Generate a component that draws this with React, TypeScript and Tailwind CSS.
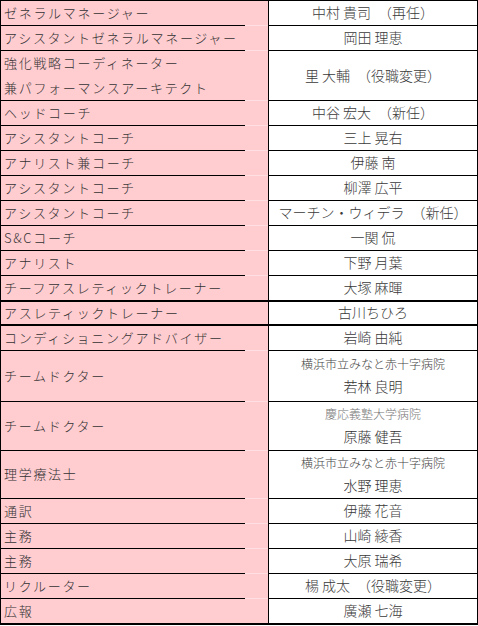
import React from "react";

type Row = {
  label: string[];
  name?: string;
  hospital?: string;
  hospitalLight?: boolean;
  h: string; // row height incl. bottom border
  thick?: boolean;
};

const rows: Row[] = [
  { label: ["ゼネラルマネージャー"], name: "中村 貴司　（再任）", h: "h-[25px]" },
  { label: ["アシスタントゼネラルマネージャー"], name: "岡田 理恵", h: "h-[25px]" },
  { label: ["強化戦略コーディネーター", "兼パフォーマンスアーキテクト"], name: "里 大輔　（役職変更）", h: "h-[50px]" },
  { label: ["ヘッドコーチ"], name: "中谷 宏大　（新任）", h: "h-[25px]" },
  { label: ["アシスタントコーチ"], name: "三上 晃右", h: "h-[25px]" },
  { label: ["アナリスト兼コーチ"], name: "伊藤 南", h: "h-[25px]" },
  { label: ["アシスタントコーチ"], name: "柳澤 広平", h: "h-[25px]" },
  { label: ["アシスタントコーチ"], name: "マーチン・ウィデラ　（新任）", h: "h-[25px]" },
  { label: ["S&Cコーチ"], name: "一関 侃", h: "h-[25px]" },
  { label: ["アナリスト"], name: "下野 月葉", h: "h-[25px]" },
  { label: ["チーフアスレティックトレーナー"], name: "大塚 麻暉", h: "h-[26px]", thick: true },
  { label: ["アスレティックトレーナー"], name: "古川ちひろ", h: "h-[24px]", thick: true },
  { label: ["コンディショニングアドバイザー"], name: "岩崎 由純", h: "h-[25px]" },
  { label: ["チームドクター"], hospital: "横浜市立みなと赤十字病院", name: "若林 良明", h: "h-[51px]" },
  { label: ["チームドクター"], hospital: "慶応義塾大学病院", hospitalLight: true, name: "原藤 健吾", h: "h-[49px]" },
  { label: ["理学療法士"], hospital: "横浜市立みなと赤十字病院", name: "水野 理恵", h: "h-[48px]" },
  { label: ["通訳"], name: "伊藤 花音", h: "h-[25px]" },
  { label: ["主務"], name: "山崎 綾香", h: "h-[25px]" },
  { label: ["主務"], name: "大原 瑞希", h: "h-[25px]" },
  { label: ["リクルーター"], name: "楊 成太　（役職変更）", h: "h-[25px]" },
  { label: ["広報"], name: "廣瀬 七海", h: "h-[26px]", thick: true },
];

const StaffRow = ({ row }: { row: Row }) => {
  const bottom = row.thick ? "border-b-2 border-black" : "border-b border-black";
  const fillerBottom = row.thick ? "border-b-2 border-black" : "border-b border-[#ffdfe2]";
  return (
    <div className={`flex ${row.h}`}>
      {/* role */}
      <div
        className={`w-[244px] bg-[#ffccd0] ${bottom} flex flex-col justify-center pl-[3px] pb-[2px] text-[13px] font-light tracking-[1.7px] text-[#333] whitespace-nowrap`}
      >
        {row.label.map((l, i) => (
          <div key={i} className="leading-[25px]">
            {l}
          </div>
        ))}
      </div>
      {/* pink filler */}
      <div className={`w-[23px] bg-[#ffccd0] ${fillerBottom}`} />
      {/* name */}
      <div
        className={`w-[209px] bg-white border-l border-l-black ${bottom} flex flex-col items-center justify-center pb-[2px] text-[14px] font-light text-[#3a3a3a] whitespace-nowrap`}
      >
        {row.hospital && (
          <div
            className={`text-[12px] leading-[23px] ${row.hospitalLight ? "text-[#777]" : "text-[#444]"}`}
          >
            {row.hospital}
          </div>
        )}
        <div className={row.hospital ? "leading-[23px] text-[#333]" : "leading-[22px]"}>{row.name}</div>
      </div>
    </div>
  );
};

export default function App() {
  return (
    <div className="w-[478px] h-[626px] bg-white" style={{ fontFamily: '"Noto Sans CJK JP", "Noto Sans", sans-serif' }}>
      <div className="flex flex-col border-t border-l border-r border-black">
        {rows.map((r, i) => (
          <StaffRow key={i} row={r} />
        ))}
      </div>
    </div>
  );
}
